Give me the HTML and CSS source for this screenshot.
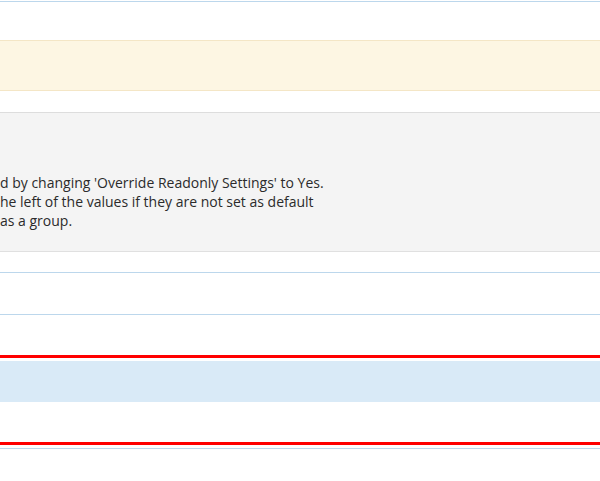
FILE: index.html
```html
<!DOCTYPE html>
<html>
<head>
<meta charset="utf-8">
<link rel="stylesheet" href="styles.css">
</head>
<body>
<div class="page">
  <div class="row row-top"></div>
  <div class="gap g38"></div>
  <div class="warning"></div>
  <div class="gap g21"></div>
  <div class="info">
    <p class="info-text">d by changing 'Override Readonly Settings' to Yes.<br>he left of the values if they are not set as default<br>as a group.</p>
  </div>
  <div class="row r20"></div>
  <div class="row r41"></div>
  <div class="row r40 red-bottom"></div>
  <div class="spacer3"></div>
  <div class="selected"></div>
  <div class="row r40 red-bottom plain"></div>
  <div class="spacer3"></div>
  <div class="row-line"></div>
</div>
</body>
</html>
```

FILE: styles.css
```css
html, body {
  margin: 0;
  padding: 0;
  background: #ffffff;
}
.page {
  width: 600px;
  height: 481px;
  overflow: hidden;
  display: flex;
  flex-direction: column;
  font-family: "Open Sans", "Noto Sans", sans-serif;
  font-size: 14px;
  color: #2b2b2b;
}
.row-top {
  height: 1px;
  border-bottom: 1px solid #bcd7ec;
  flex-shrink: 0;
}
.gap { flex-shrink: 0; }
.g38 { height: 38px; }
.g21 { height: 21px; }
.warning {
  flex-shrink: 0;
  height: 49px;
  background: #fdf6e3;
  border-top: 1px solid #f4e6c6;
  border-bottom: 1px solid #f4e6c6;
}
.info {
  flex-shrink: 0;
  height: 138px;
  background: #f4f4f4;
  border-top: 1px solid #dddddd;
  border-bottom: 1px solid #e0e0e0;
  box-sizing: content-box;
}
.info-text {
  margin: 60px 0 0 0;
  line-height: 19px;
  white-space: nowrap;
}
.row {
  flex-shrink: 0;
  border-bottom: 1px solid #bcd7ec;
}
.r20 { height: 20px; }
.r41 { height: 41px; }
.r40 { height: 40px; }
.red-bottom {
  border-bottom: 3px solid #ff0000;
}
.spacer3 { flex-shrink: 0; height: 3px; }
.selected {
  flex-shrink: 0;
  height: 41px;
  background: #d9eaf7;
}
.row-line {
  flex-shrink: 0;
  height: 0;
  border-top: 1px solid #bcd7ec;
}
```
